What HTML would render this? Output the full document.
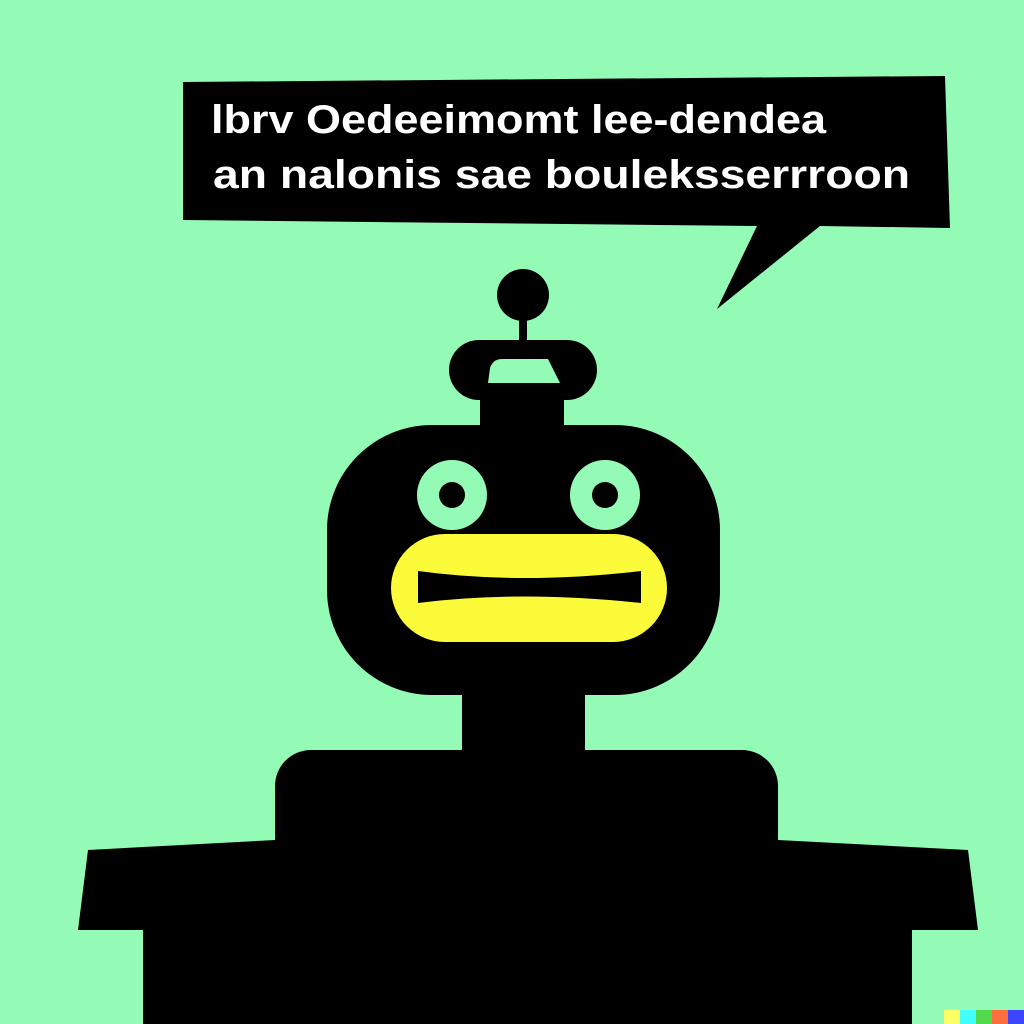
<!DOCTYPE html>
<html><head><style>
html,body{margin:0;padding:0;background:#94fbb6;}
svg{display:block}
</style></head><body>
<svg width="1024" height="1024" viewBox="0 0 1024 1024" xmlns="http://www.w3.org/2000/svg">
<rect width="1024" height="1024" fill="#94fbb6"/>
<polygon points="183,82 945,76 950,228 820,226 717,309 757,226 183,220" fill="#000"/>
<text x="211" y="133" font-family="Liberation Sans, sans-serif" font-weight="bold" font-size="40" fill="#fff" textLength="615" lengthAdjust="spacingAndGlyphs">lbrv Oedeeimomt lee-dendea</text>
<text x="213" y="188" font-family="Liberation Sans, sans-serif" font-weight="bold" font-size="40" fill="#fff" textLength="697" lengthAdjust="spacingAndGlyphs">an nalonis sae bouleksserrroon</text>
<circle cx="523" cy="295" r="26" fill="#000"/>
<rect x="519" y="315" width="8" height="30" fill="#000"/>
<rect x="449" y="340" width="148" height="60" rx="30" fill="#000"/>
<path d="M488 383 L490 368 Q493 359 502 359 L548 359 L560 383 Z" fill="#94fbb6"/>
<rect x="480" y="395" width="84" height="40" fill="#000"/>
<rect x="327" y="425" width="393" height="270" rx="105" fill="#000"/>
<rect x="462" y="680" width="123" height="80" fill="#000"/>
<circle cx="452" cy="495" r="35" fill="#94fbb6"/>
<circle cx="452" cy="495" r="13" fill="#000"/>
<circle cx="605" cy="495" r="35" fill="#94fbb6"/>
<circle cx="605" cy="495" r="13" fill="#000"/>
<rect x="391" y="534" width="276" height="108" rx="54" fill="#fbfb3a"/>
<path d="M418 571 Q520 585 641 571 L641 603 Q520 590 418 603 Z" fill="#000"/>
<rect x="275" y="750" width="503" height="200" rx="36" fill="#000"/>
<polygon points="88,850 275,840 778,840 968,850 978,930 78,930" fill="#000"/>
<rect x="143" y="900" width="769" height="124" fill="#000"/>
<rect x="944" y="1010" width="16" height="14" fill="#ffff66"/>
<rect x="960" y="1010" width="16" height="14" fill="#42ffff"/>
<rect x="976" y="1010" width="16" height="14" fill="#51da4c"/>
<rect x="992" y="1010" width="16" height="14" fill="#ff6e3c"/>
<rect x="1008" y="1010" width="16" height="14" fill="#3c46ff"/>
</svg>
</body></html>
